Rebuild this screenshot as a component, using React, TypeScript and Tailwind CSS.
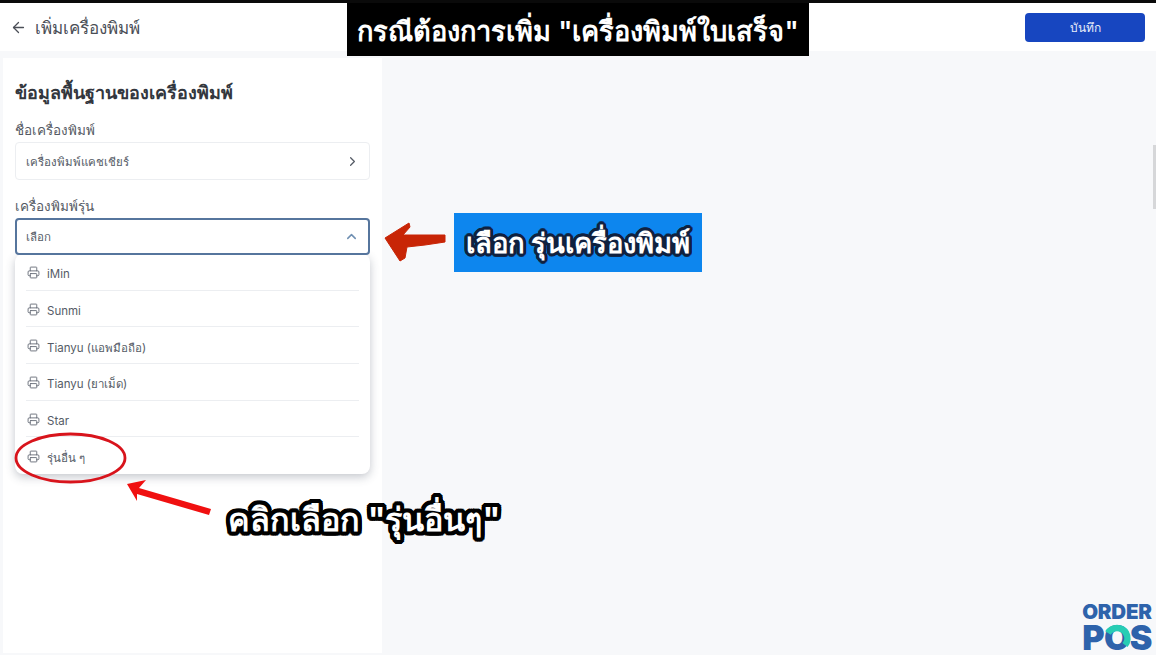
import React from 'react';
import { ArrowLeft, ChevronRight, ChevronUp, Printer } from 'lucide-react';

const models = ['iMin', 'Sunmi', 'Tianyu (แอพมือถือ)', 'Tianyu (ยาเม็ด)', 'Star', 'รุ่นอื่น ๆ'];

const ModelMenu: React.FC = () => (
  <div className="absolute left-0 right-0 top-[36px] z-10 rounded-lg bg-white px-[11px] shadow-[0_3px_10px_rgba(60,70,90,0.3)]">
    {models.map((name, i) => (
      <div
        key={name}
        className={`flex h-[36.7px] items-center gap-[7px] border-[#eceef1] pl-[1px] text-[11.5px] text-[#555b66] ${i < models.length - 1 ? 'border-b' : ''}`}
      >
        <Printer size={13} strokeWidth={1.6} className="mt-[1px] text-[#5f6570]" />
        <span className="pt-[6px]">{name}</span>
      </div>
    ))}
  </div>
);

const App: React.FC = () => {
  return (
    <div className="relative flex h-[655px] w-[1156px] flex-col overflow-hidden bg-[#f7f8fa] font-['Inter','Noto_Sans','Liberation_Sans',sans-serif]">
      {/* app header */}
      <header className="flex h-[51px] shrink-0 items-center justify-between border-t-[3px] border-[#0a0a0a] bg-white pl-[10px] pr-[11px]">
        <div className="flex items-center gap-[8px] text-[#4b4f57]">
          <ArrowLeft size={17} strokeWidth={1.8} />
          <h1 className="pt-[2px] text-[17px] leading-none">เพิ่มเครื่องพิมพ์</h1>
        </div>
        <button className="h-[29px] w-[120px] rounded-[4px] bg-[#1746c0] pt-[1px] text-[12px] text-[#e8edf9]">บันทึก</button>
      </header>

      <div className="flex-1 pl-[3px] pt-[7px] pb-[2px]">
        <section className="h-full w-[379px] bg-white px-3 pt-[23px]">
          <h2 className="text-[18px] font-semibold leading-[24px] text-[#33373e]">ข้อมูลพื้นฐานของเครื่องพิมพ์</h2>

          <label className="mt-[15px] block text-[13.5px] leading-[20px] text-[#555a63]">ชื่อเครื่องพิมพ์</label>
          <div className="mt-[2px] flex h-[38px] items-center justify-between rounded-[4px] border border-[#eceef1] pl-[10px] pr-[9px] text-[11.5px] text-[#555b66]">
            <span className="pt-[4px]">เครื่องพิมพ์แคชเชียร์</span>
            <ChevronRight size={15} className="text-[#555b66]" />
          </div>

          <label className="mt-[16px] block text-[13.5px] leading-[20px] text-[#555a63]">เครื่องพิมพ์รุ่น</label>
          <div className="relative mt-[2px]">
            <div className="relative z-20 flex h-[37px] items-center justify-between rounded-[4px] border-2 border-[#56759d] bg-white pl-[9px] pr-[9px] text-[11.5px] text-[#555b66]">
              <span className="pt-[2px]">เลือก</span>
              <ChevronUp size={15} strokeWidth={2.4} className="text-[#6f8fb2]" />
            </div>
            <ModelMenu />
          </div>
        </section>
      </div>

      {/* scrollbar sliver at the window edge */}
      <div className="absolute right-0 top-[145px] h-[64px] w-[3px] bg-[#d6d7d9]" />

      {/* tutorial annotations laid over the screenshot */}
      <div className="absolute left-[347px] top-[3px] flex h-[53px] w-[462px] items-center justify-center bg-black pt-[6px] text-[27.2px] font-semibold text-white">
        กรณีต้องการเพิ่ม "เครื่องพิมพ์ใบเสร็จ"
      </div>

      <div className="absolute left-[454px] top-[213px] flex h-[59px] w-[248px] items-center justify-center bg-[#0d86ee] pt-[3px] text-[27.4px] font-bold text-white [text-shadow:3px_0_0_#10213f,-3px_0_0_#10213f,0_3px_0_#10213f,0_-3px_0_#10213f,2px_2px_0_#10213f,-2px_2px_0_#10213f,2px_-2px_0_#10213f,-2px_-2px_0_#10213f,3px_1px_0_#10213f,-3px_1px_0_#10213f,3px_-1px_0_#10213f,-3px_-1px_0_#10213f,1px_3px_0_#10213f,-1px_3px_0_#10213f,1px_-3px_0_#10213f,-1px_-3px_0_#10213f]">
        เลือก รุ่นเครื่องพิมพ์
      </div>

      <div className="absolute left-[228px] top-[494px] z-20 text-[32.3px] font-bold leading-[52px] text-white [text-shadow:4px_0_0_#000,-4px_0_0_#000,0_4px_0_#000,0_-4px_0_#000,3px_3px_0_#000,-3px_3px_0_#000,3px_-3px_0_#000,-3px_-3px_0_#000,4px_2px_0_#000,-4px_2px_0_#000,4px_-2px_0_#000,-4px_-2px_0_#000,2px_4px_0_#000,-2px_4px_0_#000,2px_-4px_0_#000,-2px_-4px_0_#000]">
        คลิกเลือก "รุ่นอื่นๆ"
      </div>

      <svg className="absolute left-0 top-0 z-30" width="1156" height="655" viewBox="0 0 1156 655" fill="none">
        {/* red marker arrow */}
        <path d="M385 238 L409 223 L410 227 L403 235 L445 235 L445 242 L425 245 L407 247 L405 258 L400 261 Z" fill="#c82506" stroke="#c82506" strokeLinejoin="round" />
        {/* circled option */}
        <ellipse cx="70.5" cy="458" rx="54.5" ry="24" stroke="#d8141c" strokeWidth="2.8" />
        {/* pointer arrow */}
        <path d="M127 484 L146 480 L139 488 L211 509 L209 515 L137 494 L137 501 Z" fill="#f01010" />
      </svg>

      {/* logo */}
      <div className="absolute right-[4px] top-[601px] font-['Inter','Liberation_Sans',sans-serif] font-black text-[#2e63ab]">
        <div className="text-[20.5px] leading-[22px] tracking-[-0.2px]">ORDER</div>
        <div className="relative text-[34px] leading-[30px] tracking-[-0.5px]">
          POS
          <svg className="absolute left-[21px] top-[1px]" width="28" height="28" viewBox="0 0 28 28" fill="none">
            <path d="M5 9 A10.5 10.5 0 0 1 23 9 A10.5 10.5 0 0 1 22 21" stroke="#27cdb4" strokeWidth="6.5" />
          </svg>
        </div>
      </div>
    </div>
  );
};

export default App;
